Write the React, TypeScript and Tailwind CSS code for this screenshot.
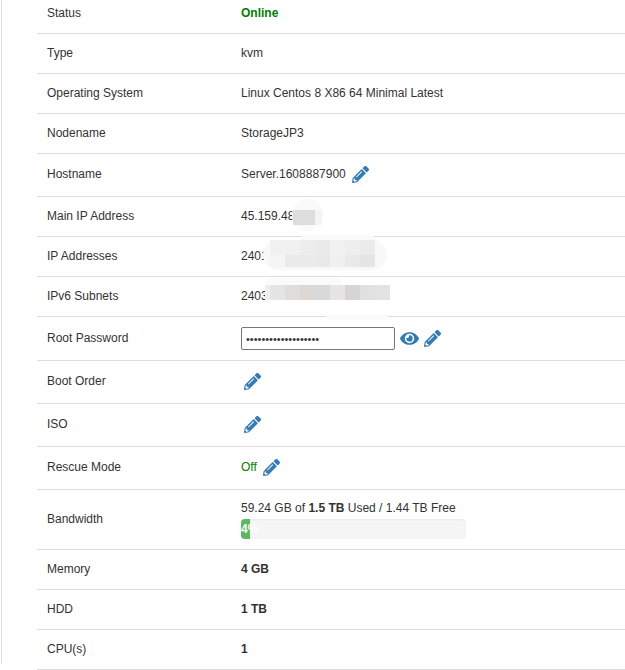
import { FaEye, FaPencilAlt } from "react-icons/fa";

function Pencil({ className = "" }: { className?: string }) {
  return <FaPencilAlt className={"text-[#337ab7] text-[17px] shrink-0 " + className} />;
}

function Row({ label, h, children }: { label: string; h: string; children: React.ReactNode }) {
  return (
    <div className={"flex items-center border-b border-[#dddddd] " + h}>
      <div className="w-[204px] pl-[10px] shrink-0">{label}</div>
      <div className="flex-1 min-w-0">{children}</div>
    </div>
  );
}

function Cell({ className }: { className: string }) {
  return <div className={"h-full w-[15px] shrink-0 " + className} />;
}

export default function App() {
  return (
    <div className="relative h-[670px] w-[625px] overflow-hidden bg-white">
      <div className="ml-[1px] h-full border-l border-[#dddddd] pl-[35px] text-[12px] leading-[17px] text-[#333333] font-['Liberation_Sans',Arial,sans-serif]">
        <div className="-mt-[6px]">
          <Row label="Status" h="h-[40px]">
            <span className="font-bold text-[#008000]">Online</span>
          </Row>
          <Row label="Type" h="h-[40px]">kvm</Row>
          <Row label="Operating System" h="h-[40px]">Linux Centos 8 X86 64 Minimal Latest</Row>
          <Row label="Nodename" h="h-[40px]">StorageJP3</Row>
          <Row label="Hostname" h="h-[43px] pb-[1px]">
            <div className="flex items-center gap-[6px]">
              <span>Server.1608887900</span>
              <Pencil />
            </div>
          </Row>
          <Row label="Main IP Address" h="h-[40px]">45.159.48</Row>
          <Row label="IP Addresses" h="h-[40px]">2401</Row>
          <Row label="IPv6 Subnets" h="h-[40px]">2403</Row>
          <Row label="Root Password" h="h-[44px]">
            <div className="flex items-center gap-[5px]">
              <input
                type="password"
                readOnly
                value="aaaaaaaaaaaaaaaaaaa"
                className="h-[23px] w-[154px] rounded-[2px] border border-[#767676] bg-white px-[4px] text-[11px] text-[#333333] outline-none"
              />
              <FaEye className="text-[#337ab7] text-[19px] shrink-0" />
              <Pencil />
            </div>
          </Row>
          <Row label="Boot Order" h="h-[43px] pb-[1px]"><Pencil className="ml-[3px]" /></Row>
          <Row label="ISO" h="h-[43px] pb-[1px]"><Pencil className="ml-[3px]" /></Row>
          <Row label="Rescue Mode" h="h-[43px] pb-[1px]">
            <div className="flex items-center gap-[6px]">
              <span className="text-[#008000]">Off</span>
              <Pencil />
            </div>
          </Row>
          <Row label="Bandwidth" h="h-[60px]">
            <div>
              <div className="h-[17px] -translate-y-[1px]">
                59.24 GB of <b>1.5 TB</b> Used / 1.44 TB Free
              </div>
              <div className="mt-[1px] h-[20px] w-[225px] overflow-hidden rounded-[4px] bg-[#f5f5f5] shadow-[inset_0_1px_2px_rgba(0,0,0,0.05)]">
                <div className="h-full w-[9px] bg-[#5cb85c] text-center font-bold leading-[20px] text-white whitespace-nowrap">
                  4%
                </div>
              </div>
            </div>
          </Row>
          <Row label="Memory" h="h-[40px]"><b>4 GB</b></Row>
          <Row label="HDD" h="h-[40px]"><b>1 TB</b></Row>
          <Row label="CPU(s)" h="h-[40px]"><b>1</b></Row>
        </div>
      </div>

      {/* Redaction smudges painted over the addresses */}
      <div className="absolute left-[292px] top-[199px] h-[32px] w-[31px] rounded-full bg-[#fafafa]" />
      <div className="absolute left-[293px] top-[210px] flex h-[15px]">
        <div className="h-full w-[22px] bg-[#dedddd]" />
        <div className="h-full w-[7px] bg-[#f2f3f5]" />
      </div>

      <div className="absolute left-[263px] top-[240px] h-[30px] w-[124px] rounded-[15px] bg-[#f8f8f8]" />
      <div className="absolute left-[300px] top-[235px] h-[8px] w-[76px] rounded-t-[6px] bg-[#fafafa]" />
      <div className="absolute left-[270px] top-[240px] flex h-[15px]">
        <Cell className="bg-[#f1f1f1]" />
        <Cell className="bg-[#f1f1f1]" />
        <Cell className="bg-[#ededed]" />
        <Cell className="bg-[#e9eaeb]" />
        <Cell className="bg-[#f1f1f1]" />
        <Cell className="bg-[#efeeee]" />
        <Cell className="bg-[#ebebea]" />
      </div>
      <div className="absolute left-[270px] top-[255px] flex h-[12px]">
        <Cell className="bg-[#f5f5f5]" />
        <Cell className="bg-[#eaeaea]" />
        <Cell className="bg-[#ebeaea]" />
        <Cell className="bg-[#e8e9e9]" />
        <Cell className="bg-[#f0f0ef]" />
        <Cell className="bg-[#e9e9e9]" />
        <Cell className="bg-[#e5e5e5]" />
      </div>

      <div className="absolute left-[265px] top-[278px] h-[10px] w-[78px] rounded-t-[8px] bg-[#fafafa]" />
      <div className="absolute left-[265px] top-[285px] flex h-[15px]">
        <div className="h-full w-[5px] bg-[#efefef]" />
        <Cell className="bg-[#e6e5e5]" />
        <Cell className="bg-[#dfdedc]" />
        <Cell className="bg-[#dcd8d5]" />
        <Cell className="bg-[#d8d9db]" />
        <Cell className="bg-[#e6e5e3]" />
        <Cell className="bg-[#d6d4d6]" />
        <Cell className="bg-[#e0e1e1]" />
        <Cell className="bg-[#e3e3e1]" />
      </div>
      <div className="absolute left-[326px] top-[315px] h-[5px] w-[62px] rounded-b-[5px] bg-[#fafafa]" />
    </div>
  );
}
